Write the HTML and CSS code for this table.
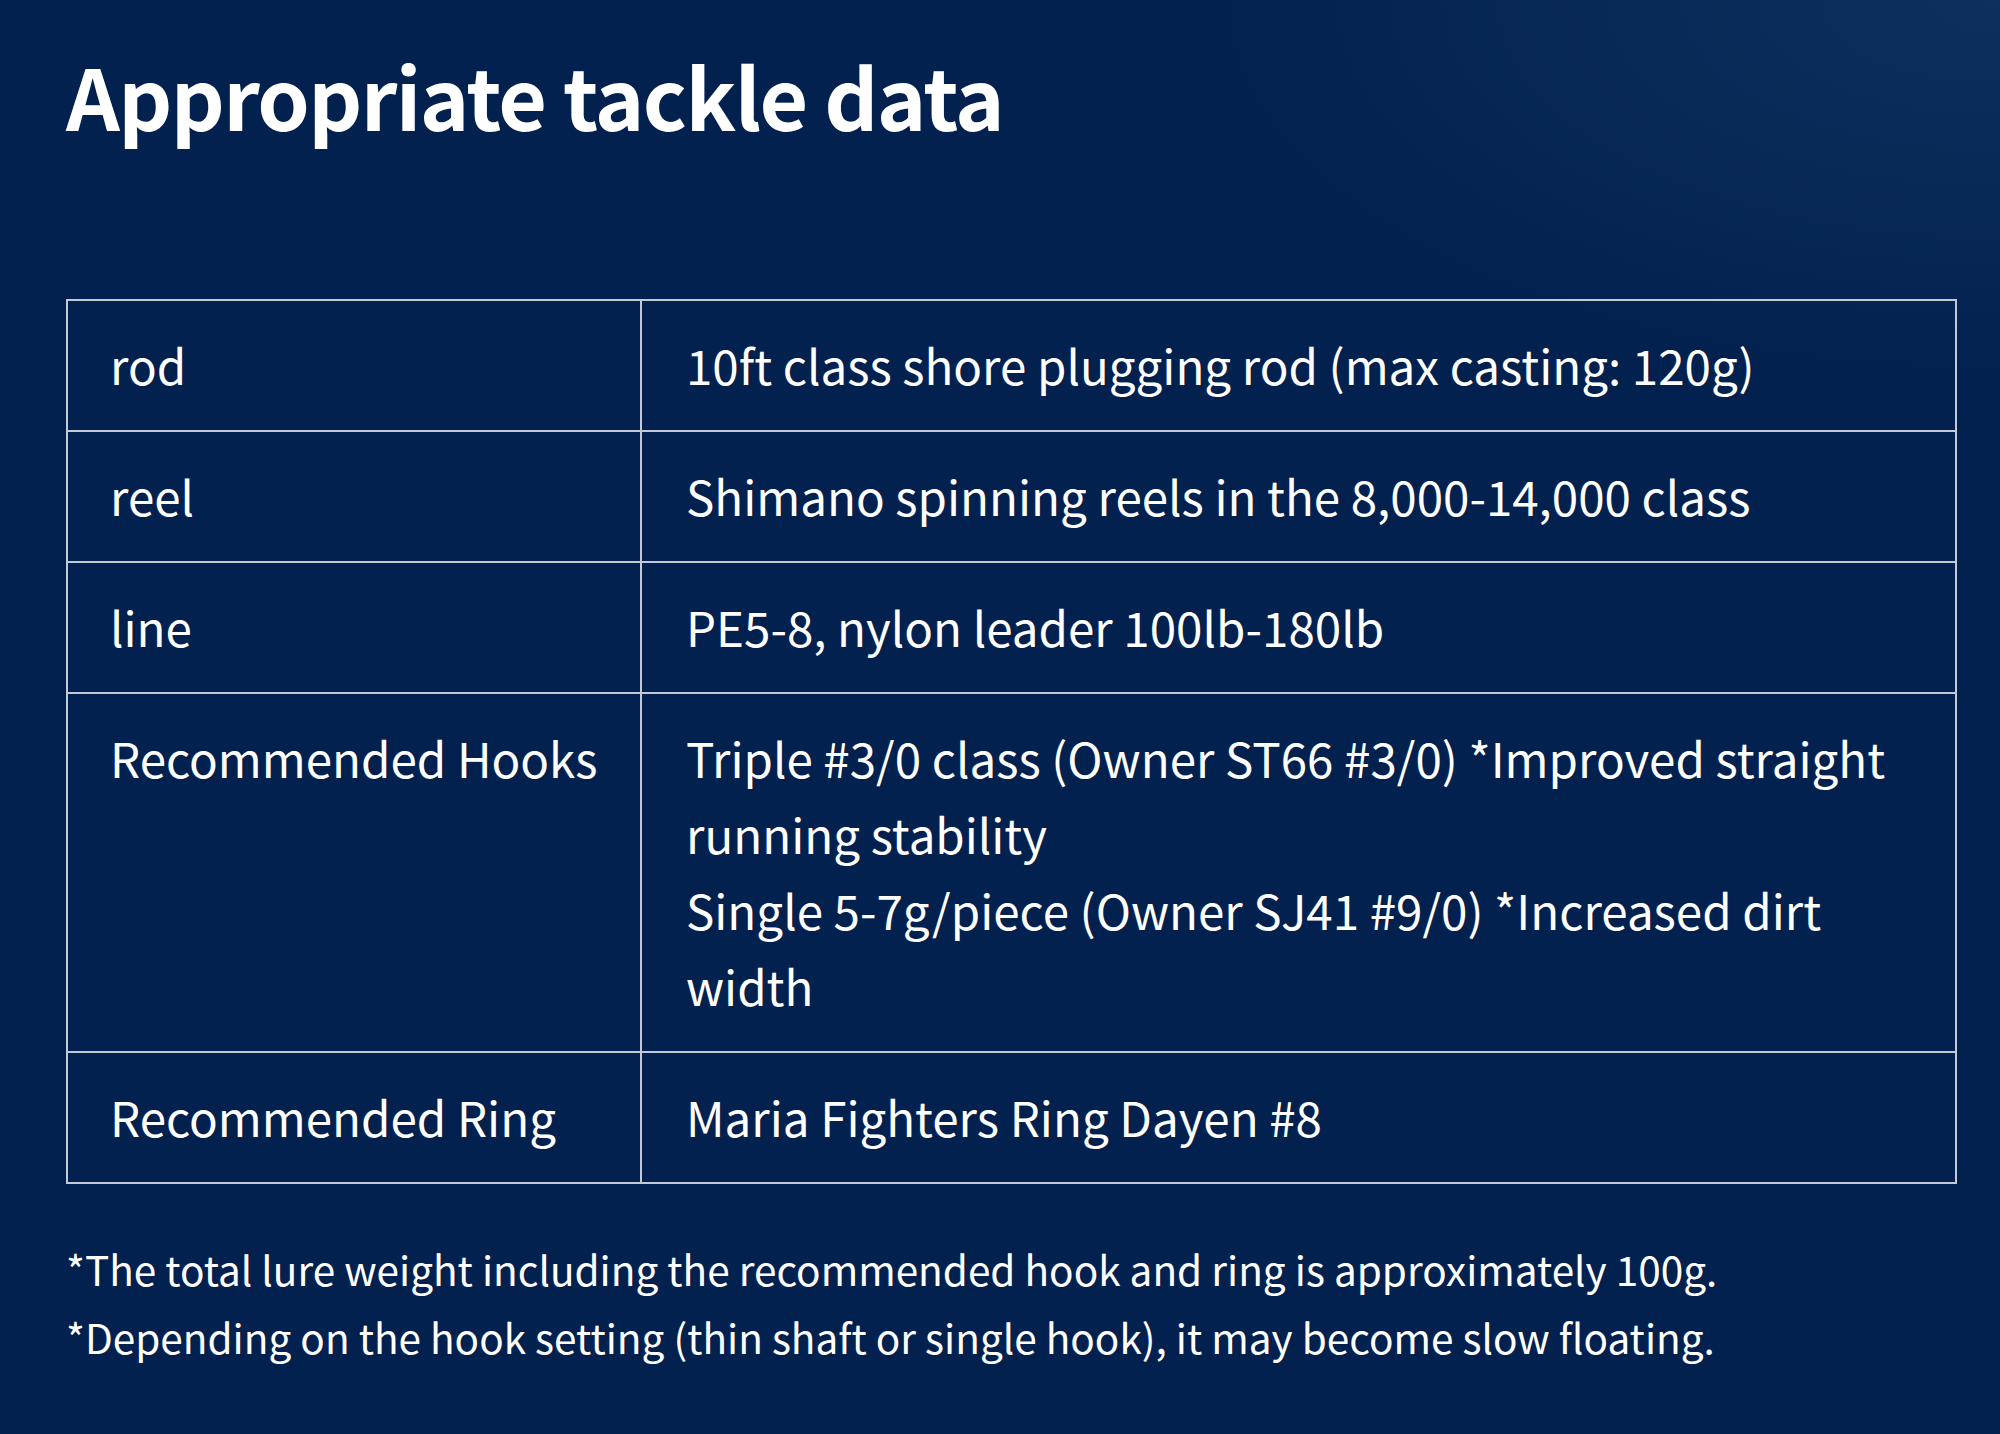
FILE: index.html
```
<!DOCTYPE html>
<html lang="en">
<head>
<meta charset="utf-8">
<title>Appropriate tackle data</title>
<link rel="stylesheet" href="styles.css">
</head>
<body>
<main class="page">
  <h1 class="title">Appropriate tackle data</h1>
  <table class="tackle">
    <tbody>
      <tr>
        <th class="label">rod</th>
        <td class="value">10ft class shore plugging rod (max casting: 120g)</td>
      </tr>
      <tr>
        <th class="label">reel</th>
        <td class="value">Shimano spinning reels in the 8,000-14,000 class</td>
      </tr>
      <tr>
        <th class="label">line</th>
        <td class="value">PE5-8, nylon leader 100lb-180lb</td>
      </tr>
      <tr>
        <th class="label">Recommended Hooks</th>
        <td class="value">Triple #3/0 class (Owner ST66 #3/0) *Improved straight running stability<br>Single 5-7g/piece (Owner SJ41 #9/0) *Increased dirt width</td>
      </tr>
      <tr>
        <th class="label">Recommended Ring</th>
        <td class="value">Maria Fighters Ring Dayen #8</td>
      </tr>
    </tbody>
  </table>
  <div class="notes">
    <p class="note">*The total lure weight including the recommended hook and ring is approximately 100g.</p>
    <p class="note">*Depending on the hook setting (thin shaft or single hook), it may become slow floating.</p>
  </div>
</main>
</body>
</html>
```
FILE: styles.css
```
html, body {
  margin: 0;
  padding: 0;
}
body {
  width: 2000px;
  height: 1434px;
  overflow: hidden;
  background-color: #03214e;
  background-image:
    radial-gradient(ellipse 800px 380px at 100% 0%, rgba(30, 70, 120, 0.4), rgba(30, 70, 120, 0) 100%);
  color: #ffffff;
  font-family: "Noto Sans CJK JP", "Source Sans Pro", "Noto Sans", sans-serif;
}
.page {
  padding: 35px 0 0 66px;
  box-sizing: border-box;
}
.title {
  margin: 0;
  font-size: 84px;
  font-weight: 700;
  line-height: 120px;
  letter-spacing: -1.6px;
}
.tackle {
  margin-top: 144px;
  width: 1891px;
  border-collapse: collapse;
  border: 2px solid #c3cad7;
}
.label, .value {
  border: 2px solid #c3cad7;
  padding: 26px 42px 27px;
  font-size: 47.5px;
  font-weight: 400;
  line-height: 76px;
  text-align: left;
  vertical-align: top;
}
.label {
  width: 488px;
}
.value {
  padding-left: 44px;
}
.notes {
  margin-top: 51px;
}
.note {
  margin: 0;
  font-size: 40.5px;
  line-height: 68px;
}
```
